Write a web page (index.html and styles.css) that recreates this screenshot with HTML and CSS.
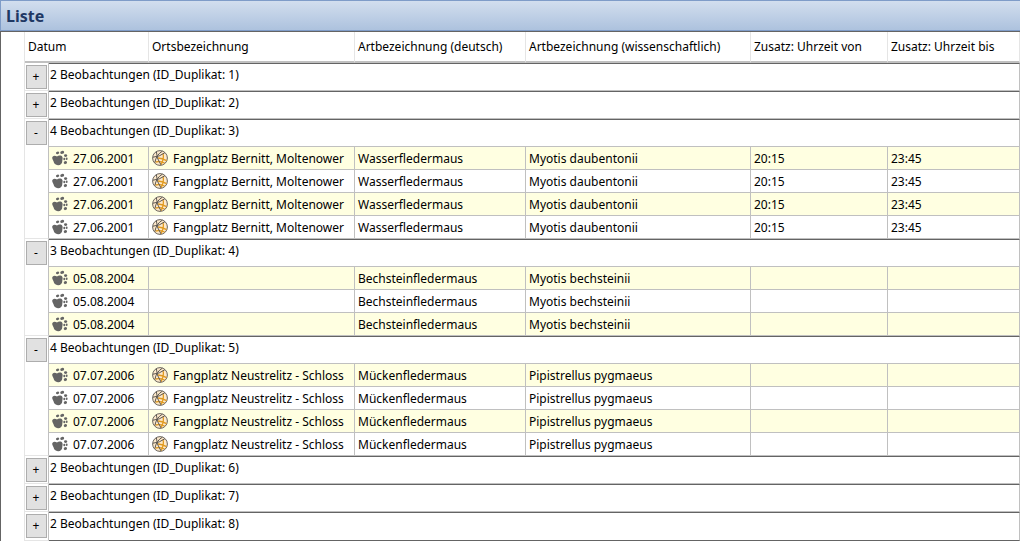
FILE: index.html
```
<!DOCTYPE html>
<html lang="de">
<head>
<meta charset="utf-8">
<title>Liste</title>
<link rel="stylesheet" href="styles.css">
</head>
<body>
<svg class="sprites" aria-hidden="true">
  <symbol id="paw" viewBox="0 0 16 16">
    <path d="M.6 6.8C1.6 5.4 3.6 5.8 5 6.4C6.6 5.2 9.6 5.2 10.4 7C11 8.6 10.2 9.6 10.3 11C10.3 13.4 8.6 15.2 6.2 15.2C3.6 15.3 2 13.8 1.6 11.6C1.2 9.8 -.6 8.4 .6 6.8Z"/>
    <ellipse cx="5.6" cy="2.9" rx="1.7" ry="1.3" transform="rotate(-25 5.6 2.9)"/>
    <ellipse cx="10.2" cy="2.4" rx="2" ry="1.5" transform="rotate(-15 10.2 2.4)"/>
    <ellipse cx="13.6" cy="5.6" rx="1.6" ry="1.3"/>
    <ellipse cx="12.3" cy="9" rx="1" ry="1.3"/>
    <ellipse cx="14.7" cy="8.8" rx=".9" ry="1.3"/>
    <ellipse cx="13.4" cy="12.6" rx="1.7" ry="1.4" transform="rotate(-25 13.4 12.6)"/>
  </symbol>
  <symbol id="globe" viewBox="0 0 16 16">
    <circle cx="8" cy="8" r="7.4" fill="#fde9cb" stroke="#6a655f"/>
    <g fill="none" stroke="#e09a20" stroke-width="1.3">
      <path d="M6 8Q10 8.4 14.6 10.6M11 3.4Q12.4 8.5 9 14.8M3.4 12Q8 10.8 12.6 13"/>
    </g>
    <g fill="none" stroke="#5c5751">
      <path d="M1 7.2Q7.5 6.8 12.8 2.8M4.4 1.8Q4.2 8 9 14.9M10.4 1.2Q4.4 4.5 2.8 12.6"/>
    </g>
  </symbol>
</svg>
<main class="window">
  <header class="titlebar"><h1 class="title">Liste</h1></header>
  <div class="pane">
    <table class="list">
      <colgroup>
        <col class="col-toggle"><col class="col-date"><col class="col-place"><col class="col-german"><col class="col-latin"><col class="col-from"><col class="col-to">
      </colgroup>
      <thead>
        <tr>
          <th colspan="2" scope="col">Datum</th>
          <th scope="col">Ortsbezeichnung</th>
          <th scope="col">Artbezeichnung (deutsch)</th>
          <th scope="col">Artbezeichnung (wissenschaftlich)</th>
          <th scope="col">Zusatz: Uhrzeit von</th>
          <th scope="col">Zusatz: Uhrzeit bis</th>
        </tr>
      </thead>
      <tbody>
        <tr class="group"><td class="toggle-cell"><button class="toggle" type="button" aria-labelledby="g1" aria-expanded="false">+</button></td><td class="group-title" colspan="6" id="g1">2 Beobachtungen (ID_Duplikat: 1)</td></tr>
      </tbody>
      <tbody>
        <tr class="group"><td class="toggle-cell"><button class="toggle" type="button" aria-labelledby="g2" aria-expanded="false">+</button></td><td class="group-title" colspan="6" id="g2">2 Beobachtungen (ID_Duplikat: 2)</td></tr>
      </tbody>
      <tbody>
        <tr class="group"><td class="toggle-cell" rowspan="5"><button class="toggle" type="button" aria-labelledby="g3" aria-expanded="true">-</button></td><td class="group-title" colspan="6" id="g3">4 Beobachtungen (ID_Duplikat: 3)</td></tr>
        <tr class="item"><td><span class="entry"><svg class="icon paw"><use href="#paw"/></svg>27.06.2001</span></td><td><span class="entry"><svg class="icon"><use href="#globe"/></svg>Fangplatz Bernitt, Moltenower</span></td><td>Wasserfledermaus</td><td>Myotis daubentonii</td><td>20:15</td><td>23:45</td></tr>
        <tr class="item"><td><span class="entry"><svg class="icon paw"><use href="#paw"/></svg>27.06.2001</span></td><td><span class="entry"><svg class="icon"><use href="#globe"/></svg>Fangplatz Bernitt, Moltenower</span></td><td>Wasserfledermaus</td><td>Myotis daubentonii</td><td>20:15</td><td>23:45</td></tr>
        <tr class="item"><td><span class="entry"><svg class="icon paw"><use href="#paw"/></svg>27.06.2001</span></td><td><span class="entry"><svg class="icon"><use href="#globe"/></svg>Fangplatz Bernitt, Moltenower</span></td><td>Wasserfledermaus</td><td>Myotis daubentonii</td><td>20:15</td><td>23:45</td></tr>
        <tr class="item"><td><span class="entry"><svg class="icon paw"><use href="#paw"/></svg>27.06.2001</span></td><td><span class="entry"><svg class="icon"><use href="#globe"/></svg>Fangplatz Bernitt, Moltenower</span></td><td>Wasserfledermaus</td><td>Myotis daubentonii</td><td>20:15</td><td>23:45</td></tr>
      </tbody>
      <tbody>
        <tr class="group"><td class="toggle-cell" rowspan="4"><button class="toggle" type="button" aria-labelledby="g4" aria-expanded="true">-</button></td><td class="group-title" colspan="6" id="g4">3 Beobachtungen (ID_Duplikat: 4)</td></tr>
        <tr class="item"><td><span class="entry"><svg class="icon paw"><use href="#paw"/></svg>05.08.2004</span></td><td></td><td>Bechsteinfledermaus</td><td>Myotis bechsteinii</td><td></td><td></td></tr>
        <tr class="item"><td><span class="entry"><svg class="icon paw"><use href="#paw"/></svg>05.08.2004</span></td><td></td><td>Bechsteinfledermaus</td><td>Myotis bechsteinii</td><td></td><td></td></tr>
        <tr class="item"><td><span class="entry"><svg class="icon paw"><use href="#paw"/></svg>05.08.2004</span></td><td></td><td>Bechsteinfledermaus</td><td>Myotis bechsteinii</td><td></td><td></td></tr>
      </tbody>
      <tbody>
        <tr class="group"><td class="toggle-cell" rowspan="5"><button class="toggle" type="button" aria-labelledby="g5" aria-expanded="true">-</button></td><td class="group-title" colspan="6" id="g5">4 Beobachtungen (ID_Duplikat: 5)</td></tr>
        <tr class="item"><td><span class="entry"><svg class="icon paw"><use href="#paw"/></svg>07.07.2006</span></td><td><span class="entry"><svg class="icon"><use href="#globe"/></svg>Fangplatz Neustrelitz - Schloss</span></td><td>Mückenfledermaus</td><td>Pipistrellus pygmaeus</td><td></td><td></td></tr>
        <tr class="item"><td><span class="entry"><svg class="icon paw"><use href="#paw"/></svg>07.07.2006</span></td><td><span class="entry"><svg class="icon"><use href="#globe"/></svg>Fangplatz Neustrelitz - Schloss</span></td><td>Mückenfledermaus</td><td>Pipistrellus pygmaeus</td><td></td><td></td></tr>
        <tr class="item"><td><span class="entry"><svg class="icon paw"><use href="#paw"/></svg>07.07.2006</span></td><td><span class="entry"><svg class="icon"><use href="#globe"/></svg>Fangplatz Neustrelitz - Schloss</span></td><td>Mückenfledermaus</td><td>Pipistrellus pygmaeus</td><td></td><td></td></tr>
        <tr class="item"><td><span class="entry"><svg class="icon paw"><use href="#paw"/></svg>07.07.2006</span></td><td><span class="entry"><svg class="icon"><use href="#globe"/></svg>Fangplatz Neustrelitz - Schloss</span></td><td>Mückenfledermaus</td><td>Pipistrellus pygmaeus</td><td></td><td></td></tr>
      </tbody>
      <tbody>
        <tr class="group"><td class="toggle-cell"><button class="toggle" type="button" aria-labelledby="g6" aria-expanded="false">+</button></td><td class="group-title" colspan="6" id="g6">2 Beobachtungen (ID_Duplikat: 6)</td></tr>
      </tbody>
      <tbody>
        <tr class="group"><td class="toggle-cell"><button class="toggle" type="button" aria-labelledby="g7" aria-expanded="false">+</button></td><td class="group-title" colspan="6" id="g7">2 Beobachtungen (ID_Duplikat: 7)</td></tr>
      </tbody>
      <tbody class="last">
        <tr class="group"><td class="toggle-cell"><button class="toggle" type="button" aria-labelledby="g8" aria-expanded="false">+</button></td><td class="group-title" colspan="6" id="g8">2 Beobachtungen (ID_Duplikat: 8)</td></tr>
      </tbody>
    </table>
  </div>
</main>
</body>
</html>
```
FILE: styles.css
```
* {
  box-sizing: border-box;
}

body {
  margin: 0;
  background: #fff;
  color: #000;
  font: 12px/18px "Noto Sans", "Open Sans", sans-serif;
}

.sprites {
  position: absolute;
  width: 0;
  height: 0;
}

.window {
  display: flex;
  flex-direction: column;
  min-height: 100vh;
}

.titlebar {
  padding: 3px 5px 2px;
  border: 1px solid #7f9cc8;
  border-right: 0;
  background: linear-gradient(#d2deee, #adc2de);
}

.title {
  margin: 0;
  color: #1f3864;
  font-size: 16px;
  line-height: 24px;
  font-weight: 700;
}

.pane {
  flex: 1;
  padding-left: 23px;
  border-top: 1px solid #646464;
  border-left: 1px solid #646464;
}

.list {
  width: 100%;
  table-layout: fixed;
  border-collapse: separate;
  border-spacing: 0;
  border-left: 1px solid #e5e5e5;
}

.col-toggle { width: 24px; }
.col-date { width: 100px; }
.col-place { width: 206px; }
.col-german { width: 171px; }
.col-latin { width: 225px; }
.col-from { width: 137px; }

th {
  height: 31px;
  padding: 0 3px;
  border-right: 1px solid #e5e5e5;
  border-bottom: 2px solid #c0c0c0;
  font-weight: 400;
  text-align: left;
  white-space: nowrap;
}

.toggle-cell {
  padding: 2px 0 0 1px;
  border-right: 1px solid #c0c0c0;
  border-bottom: 1px solid #e5e5e5;
  vertical-align: top;
}

.toggle {
  display: block;
  width: 21px;
  height: 24px;
  padding: 0 1px 0 0;
  border: 1px solid #adadad;
  background: #e1e1e1;
  color: #000;
  font: inherit;
}

.group-title {
  height: 28px;
  padding: 2px 1px;
  border-top: 1px solid #646464;
  border-right: 1px solid #c0c0c0;
  border-bottom: 1px solid #c0c0c0;
  vertical-align: top;
}

.last .group-title {
  height: 29px;
  border-bottom: 1px solid #646464;
}

.item td {
  height: 23px;
  padding: 2px 3px 0;
  border-right: 1px solid #c0c0c0;
  border-bottom: 1px solid #c0c0c0;
  overflow: hidden;
  white-space: nowrap;
}

.item:nth-child(even) td {
  background: #ffffe1;
}

.entry {
  display: flex;
  align-items: flex-start;
  gap: 5px;
}

.icon {
  flex: none;
  width: 16px;
  height: 16px;
}

.paw {
  fill: #646464;
}
```
